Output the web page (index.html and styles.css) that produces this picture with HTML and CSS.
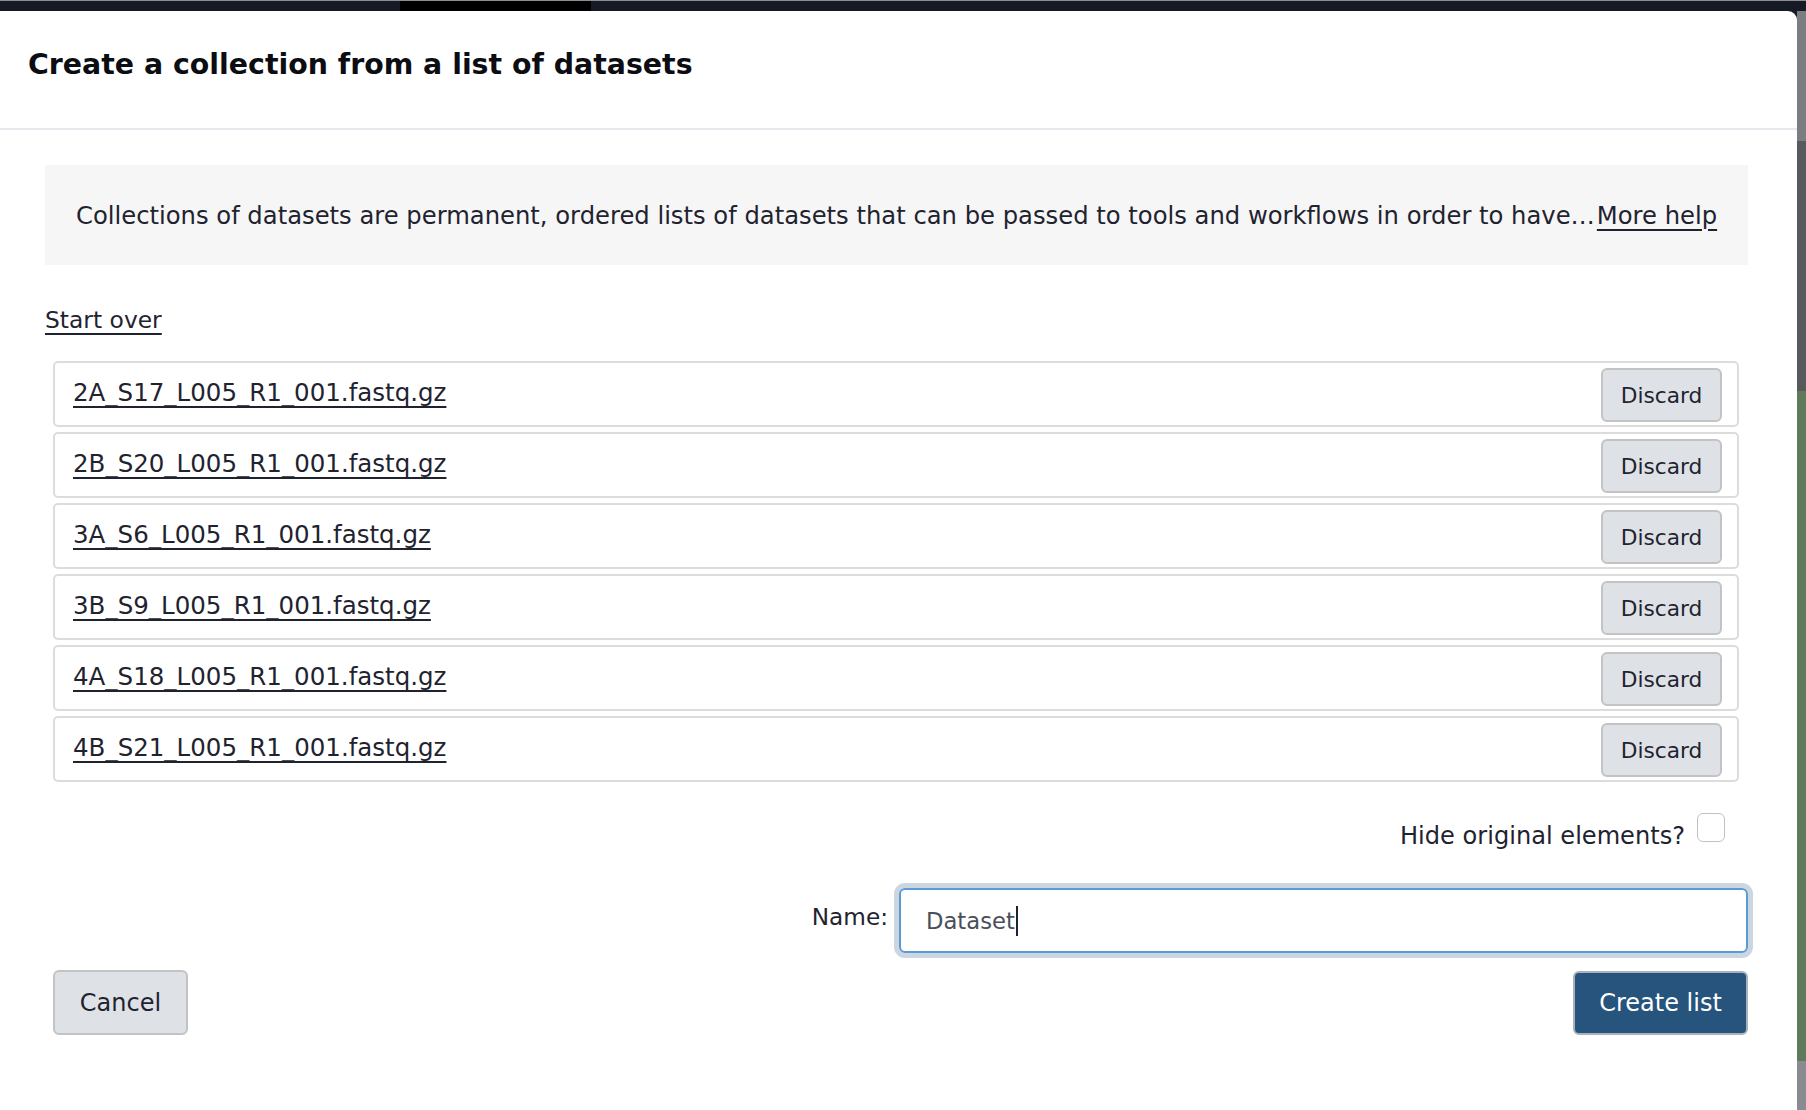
FILE: index.html
```html
<!DOCTYPE html>
<html lang="en">
<head>
<meta charset="utf-8">
<title>Create a collection from a list of datasets</title>
<link rel="stylesheet" href="styles.css">
</head>
<body>
<div class="topbar"><span class="topbar-seg"></span></div>
<div class="stage">
  <div class="modal">
    <div class="modal-header">
      <h1 class="modal-title">Create a collection from a list of datasets</h1>
    </div>
    <div class="modal-body">
      <div class="help">
        Collections of datasets are permanent, ordered lists of datasets that can be passed to tools and workflows in order to have…<a class="link" href="#">More help</a>
      </div>
      <a class="link start-over" href="#">Start over</a>
      <ul class="elements">
        <li class="element"><a class="link" href="#">2A_S17_L005_R1_001.fastq.gz</a><button class="btn btn-discard">Discard</button></li>
        <li class="element"><a class="link" href="#">2B_S20_L005_R1_001.fastq.gz</a><button class="btn btn-discard">Discard</button></li>
        <li class="element"><a class="link" href="#">3A_S6_L005_R1_001.fastq.gz</a><button class="btn btn-discard">Discard</button></li>
        <li class="element"><a class="link" href="#">3B_S9_L005_R1_001.fastq.gz</a><button class="btn btn-discard">Discard</button></li>
        <li class="element"><a class="link" href="#">4A_S18_L005_R1_001.fastq.gz</a><button class="btn btn-discard">Discard</button></li>
        <li class="element"><a class="link" href="#">4B_S21_L005_R1_001.fastq.gz</a><button class="btn btn-discard">Discard</button></li>
      </ul>
      <div class="hide-row">
        <span class="hide-label">Hide original elements?</span>
        <span class="checkbox"></span>
      </div>
      <div class="name-row">
        <span class="name-label">Name:</span>
        <div class="name-input"><span class="name-value">Dataset</span><span class="caret"></span></div>
      </div>
      <div class="footer">
        <button class="btn btn-cancel">Cancel</button>
        <button class="btn btn-create">Create list</button>
      </div>
    </div>
  </div>
  <div class="edge">
    <div class="edge-band band-a"></div>
    <div class="edge-band band-b"></div>
    <div class="edge-band band-c"></div>
    <div class="edge-band band-d"></div>
  </div>
</div>
</body>
</html>
```
FILE: styles.css
```css
* { box-sizing: border-box; }
html, body { margin: 0; padding: 0; }
body {
  width: 1806px;
  height: 1110px;
  overflow: hidden;
  background: #161a24;
  font-family: "DejaVu Sans", "Liberation Sans", sans-serif;
  color: #1f2330;
}
.topbar {
  height: 11px;
  background: #161a24;
  border-top: 1px solid #8a8d94;
  position: relative;
}
.topbar-seg {
  position: absolute;
  left: 400px;
  top: 0;
  width: 191px;
  height: 10px;
  background: #000;
}
.stage {
  display: flex;
  height: 1099px;
}
.modal {
  width: 1797px;
  height: 1099px;
  background: #fff;
  border-top-right-radius: 9px;
  display: flex;
  flex-direction: column;
}
.modal-header {
  height: 119px;
  border-bottom: 2px solid #e5e8ec;
  display: flex;
  align-items: center;
  padding: 0 0 10px 28px;
}
.modal-title {
  margin: 0;
  font-size: 28.4px;
  font-weight: bold;
  color: #0b0d12;
}
.modal-body {
  padding: 35px 49px 0 45px;
  display: flex;
  flex-direction: column;
}
.help {
  background: #f6f6f6;
  height: 100px;
  display: flex;
  align-items: center;
  padding-left: 31px;
  font-size: 24.25px;
  white-space: nowrap;
}
.link {
  color: #1f2330;
  text-decoration: underline;
  text-underline-offset: 5px;
  text-decoration-thickness: 1.5px;
}
.help .link { margin-left: 2px; }
.start-over {
  align-self: flex-start;
  margin-top: 40px;
  font-size: 23.4px;
  line-height: 30px;
}
.elements {
  list-style: none;
  margin: 26px 9px 0 8px;
  padding: 0;
  display: flex;
  flex-direction: column;
  gap: 5px;
}
.element {
  height: 66px;
  border: 2px solid #dcdcdc;
  border-radius: 5px;
  display: flex;
  align-items: center;
  justify-content: space-between;
  padding: 0 15px 0 18px;
  font-size: 24.5px;
}
.element .link { margin-top: -3px; }
.btn {
  font-family: "DejaVu Sans", "Liberation Sans", sans-serif;
  color: #1f2330;
  background: #dee2e6;
  border: 2px solid #c3c3c3;
  border-radius: 6px;
  cursor: pointer;
  padding: 0;
}
.btn-discard {
  width: 121px;
  height: 54px;
  font-size: 21.7px;
  margin-top: 1px;
  padding-top: 2px;
}
.hide-row {
  display: flex;
  justify-content: flex-end;
  align-items: flex-start;
  margin-top: 31px;
  padding-right: 23px;
  height: 34px;
}
.hide-label {
  font-size: 24.1px;
  margin-top: 8px;
  line-height: 30px;
}
.checkbox {
  width: 28px;
  height: 29px;
  margin-left: 12px;
  border: 1.5px solid #c2c2c2;
  border-radius: 6px;
  background: #fff;
}
.name-row {
  display: flex;
  justify-content: flex-end;
  align-items: center;
  margin-top: 41px;
}
.name-label {
  font-size: 23.2px;
  margin-right: 11px;
  margin-top: -9px;
}
.name-input {
  width: 849px;
  height: 65px;
  border: 2px solid #5a9ad6;
  border-radius: 6px;
  box-shadow: 0 0 0 5px #cbd6e1;
  display: flex;
  align-items: center;
  padding-left: 25px;
  font-size: 22.7px;
  color: #4a4f5c;
}
.caret {
  display: inline-block;
  width: 2px;
  height: 30px;
  background: #1f2330;
  margin-left: 1px;
}
.footer {
  display: flex;
  justify-content: space-between;
  align-items: center;
  margin-top: 17px;
  padding-left: 8px;
}
.btn-cancel {
  width: 135px;
  height: 65px;
  font-size: 24px;
}
.btn-create {
  width: 175px;
  height: 64px;
  font-size: 24px;
  background: #26547c;
  border-color: #a9b1ba;
  color: #fff;
}
.edge {
  width: 9px;
  display: flex;
  flex-direction: column;
}
.edge-band { width: 100%; }
.band-a { height: 130px; background: #7c7d80; }
.band-b { height: 250px; background: #58595c; }
.band-c { height: 670px; background: #5f7b5c; }
.band-d { flex: 1; background: #8a8b90; }
```
